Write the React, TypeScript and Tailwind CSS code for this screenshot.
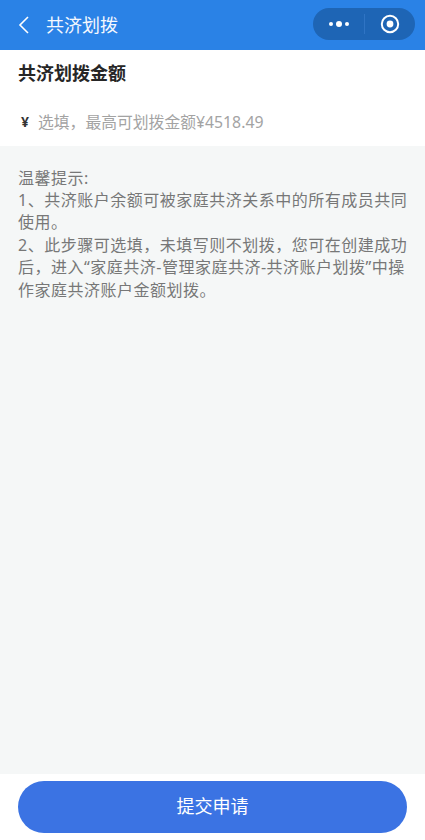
import React from "react";

const font = { fontFamily: '"Noto Sans", "Noto Sans CJK SC", sans-serif' };

export default function App() {
  return (
    <div style={font} className="flex h-[840px] w-[425px] flex-col overflow-hidden bg-white">
      <header className="flex h-[50px] shrink-0 items-center justify-between bg-[#2a82e6] pl-[18px] pr-[10px]">
        <div className="flex items-center pb-[1px]">
          <svg width="11" height="18" viewBox="0 0 11 18" fill="none" stroke="#ffffff" strokeWidth="1.6">
            <path d="M10 1 L2 9 L10 17" />
          </svg>
          <span className="ml-[17px] text-[18px] leading-[26px] text-[#f4f8fe]">共济划拨</span>
        </div>
        <div className="mb-[2px] flex h-[32px] w-[102px] items-center rounded-full bg-[#1e65b5]">
          <div className="flex w-[51px] items-center justify-center">
            <svg width="22" height="8" viewBox="0 0 22 8" fill="#ffffff">
              <circle cx="3" cy="4" r="2" />
              <circle cx="11" cy="4" r="3" />
              <circle cx="19" cy="4" r="2" />
            </svg>
          </div>
          <div className="h-[20px] w-px bg-[#2f74c4]" />
          <div className="flex flex-1 items-center justify-center">
            <svg width="20" height="20" viewBox="0 0 20 20" fill="none">
              <circle cx="10" cy="10" r="8.2" stroke="#ffffff" strokeWidth="2" />
              <circle cx="10" cy="10" r="3.4" fill="#ffffff" />
            </svg>
          </div>
        </div>
      </header>

      <section className="h-[96px] shrink-0 bg-white px-[18px]">
        <h1 className="mt-[10px] text-[18px] font-bold leading-[26px] text-[#262626]">共济划拨金额</h1>
        <div className="mt-[24px] flex items-center text-[16px] leading-[24px]">
          <span className="ml-[3px] w-[17px] text-[14px] font-bold text-[#333333]">¥</span>
          <span className="text-[15.8px] text-[#a3a3a3]">选填，最高可划拨金额¥4518.49</span>
        </div>
      </section>

      <main className="flex-1 bg-[#f5f7f7] pl-[18px] pr-[16px] pt-[20.5px] text-[16px] leading-[22.4px] tracking-[0.5px] text-[#777777]">
        <p>温馨提示:</p>
        <p>1、共济账户余额可被家庭共济关系中的所有成员共同使用。</p>
        <p>2、此步骤可选填，未填写则不划拨，您可在创建成功后，进入“家庭共济-管理家庭共济-共济账户划拨”中操作家庭共济账户金额划拨。</p>
      </main>

      <footer className="h-[66px] shrink-0 bg-white px-[18px] pt-[7px]">
        <button className="flex h-[52px] w-[389px] items-center justify-center rounded-full bg-[#3b73e3] pb-[2px] text-[18px] text-white">
          提交申请
        </button>
      </footer>
    </div>
  );
}
